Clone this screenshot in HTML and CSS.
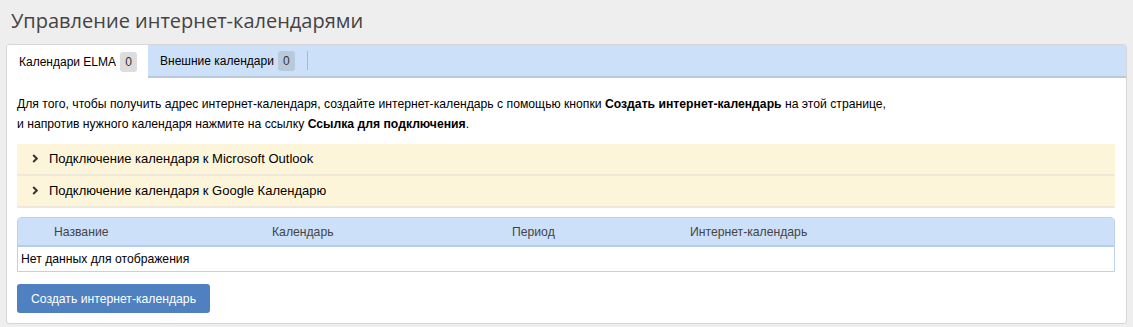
FILE: index.html
```html
<!DOCTYPE html>
<html lang="ru">
<head>
    <meta charset="UTF-8">
    <title>Управление интернет-календарями</title>
    <link rel="stylesheet" href="styles.css">
</head>
<body>
    <h1 class="page-title">Управление интернет-календарями</h1>

    <div class="panel">
        <div class="tabs">
            <div class="tab active">Календари ELMA <span class="badge">0</span></div>
            <div class="tab">Внешние календари <span class="badge">0</span></div>
            <div class="tab-sep"></div>
        </div>

        <div class="panel-body">
            <p class="hint">
                Для того, чтобы получить адрес интернет-календаря, создайте интернет-календарь с помощью кнопки <b>Создать интернет-календарь</b> на этой странице,<br>
                и напротив нужного календаря нажмите на ссылку <b>Ссылка для подключения</b>.
            </p>

            <div class="accordion">
                <div class="acc-row">
                    <svg class="chev" width="7" height="9" viewBox="0 0 7 9"><path d="M1.2 1 L4.8 4.5 L1.2 8" fill="none" stroke="#333" stroke-width="2"/></svg>
                    Подключение календаря к Microsoft Outlook
                </div>
                <div class="acc-row">
                    <svg class="chev" width="7" height="9" viewBox="0 0 7 9"><path d="M1.2 1 L4.8 4.5 L1.2 8" fill="none" stroke="#333" stroke-width="2"/></svg>
                    Подключение календаря к Google Календарю
                </div>
            </div>

            <table class="grid">
                <thead>
                    <tr>
                        <th class="c-name">Название</th>
                        <th class="c-cal">Календарь</th>
                        <th class="c-period">Период</th>
                        <th>Интернет-календарь</th>
                    </tr>
                </thead>
                <tbody>
                    <tr><td colspan="4">Нет данных для отображения</td></tr>
                </tbody>
            </table>

            <button class="btn">Создать интернет-календарь</button>
        </div>
    </div>
</body>
</html>
```

FILE: styles.css
```css
* {
    box-sizing: border-box;
    margin: 0;
    padding: 0;
}

body {
    background: #eeeeee;
    font-family: "Liberation Sans", Arial, sans-serif;
    font-size: 12.2px;
    color: #000;
    padding: 8px 6px 0 6px;
}

.page-title {
    font-family: "Open Sans", sans-serif;
    font-weight: normal;
    font-size: 20px;
    color: #444;
    line-height: 26px;
    padding-left: 5px;
    margin-bottom: 10px;
}

.panel {
    width: 1121px;
    background: white;
    border: 1px solid #d6d6d6;
    border-radius: 3px;
    overflow: hidden;
}

.tabs {
    display: flex;
    align-items: stretch;
    height: 33px;
    background: #cce0fa;
    border-bottom: 2px solid #b9c9da;
    font-size: 12px;
}

.tab {
    display: flex;
    align-items: center;
    gap: 4px;
    padding: 0 12px;
    white-space: nowrap;
    color: #000;
}

.tab.active {
    background: white;
    padding-right: 11px;
    margin-bottom: -2px;
}

.badge {
    display: inline-block;
    min-width: 17px;
    height: 20px;
    line-height: 20px;
    text-align: center;
    border-radius: 3px;
    background: #b8c9dc;
    color: #333;
}

.tab.active .badge {
    background: #dddddd;
}

.tab-sep {
    width: 1px;
    background: #a9bccf;
    margin: 6px 0;
}

.panel-body {
    padding: 16px 10px 10px 10px;
}

.hint {
    line-height: 20px;
    margin-bottom: 10px;
}

.accordion {
    width: 1098px;
    margin-bottom: 9px;
    font-size: 13px;
}

.acc-row {
    display: flex;
    align-items: center;
    height: 32px;
    background: #fdf5da;
    border-bottom: 2px solid #efe9dc;
    padding-left: 15px;
    padding-bottom: 1px;
}

.chev {
    margin-right: 10px;
}

.grid {
    width: 1098px;
    border-collapse: separate;
    border-spacing: 0;
    border: 1px solid #c0d2e8;
    border-radius: 4px 4px 0 0;
    margin-bottom: 12px;
}

.grid th {
    background: #cce0fa;
    font-weight: normal;
    color: #444;
    text-align: left;
    height: 29px;
    border-bottom: 2px solid #b9cde6;
}

.grid th.c-name {
    padding-left: 36px;
    width: 254px;
}

.grid th.c-cal {
    width: 240px;
}

.grid th.c-period {
    width: 178px;
}

.grid td {
    height: 24px;
    padding-left: 3px;
}

.btn {
    display: block;
    width: 193px;
    height: 29px;
    background: #4f81c0;
    color: white;
    border: none;
    border-radius: 3px;
    font-family: "Liberation Sans", Arial, sans-serif;
    font-size: 12.2px;
    cursor: pointer;
}
```
